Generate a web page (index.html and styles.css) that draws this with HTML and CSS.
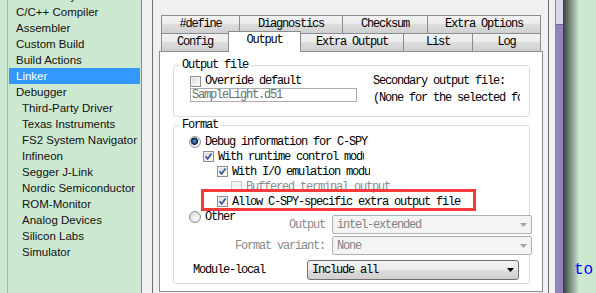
FILE: index.html
```html
<!DOCTYPE html>
<html lang="en">
<head>
    <meta charset="UTF-8">
    <title>Options - Linker</title>
    <link rel="stylesheet" href="styles.css">
</head>
<body>
<div class="screen">
    <div class="tree">
        <ul>
            <li>Static Analysis</li>
            <li>C/C++ Compiler</li>
            <li>Assembler</li>
            <li>Custom Build</li>
            <li>Build Actions</li>
            <li class="sel">Linker</li>
            <li>Debugger</li>
            <li class="sub">Third-Party Driver</li>
            <li class="sub">Texas Instruments</li>
            <li class="sub">FS2 System Navigator</li>
            <li class="sub">Infineon</li>
            <li class="sub">Segger J-Link</li>
            <li class="sub">Nordic Semiconductor</li>
            <li class="sub">ROM-Monitor</li>
            <li class="sub">Analog Devices</li>
            <li class="sub">Silicon Labs</li>
            <li class="sub">Simulator</li>
        </ul>
    </div>
    <div class="gutter"></div>

    <div class="dialog">
        <div class="tabs">
            <div class="tab-row">
                <div class="tab w78">#define</div>
                <div class="tab w103">Diagnostics</div>
                <div class="tab w85">Checksum</div>
                <div class="tab w114">Extra Options</div>
            </div>
            <div class="tab-row">
                <div class="tab w67">Config</div>
                <div class="tab on w73">Output</div>
                <div class="tab w102">Extra Output</div>
                <div class="tab w69">List</div>
                <div class="tab w69">Log</div>
            </div>
        </div>

        <div class="panel">
            <fieldset class="group">
                <legend>Output file</legend>
                <div class="out-body">
                    <div class="out-left">
                        <div class="check">
                            <span class="box"></span>
                            <span>Override default</span>
                        </div>
                        <div class="text-input">SampleLight.d51</div>
                    </div>
                    <div class="out-right">
                        <div class="line">Secondary output file:</div>
                        <div class="line second">(None for the selected format)</div>
                    </div>
                </div>
            </fieldset>

            <fieldset class="group format">
                <legend>Format</legend>
                <div class="row ind0">
                    <span class="radio on"></span>
                    <span>Debug information for C-SPY</span>
                </div>
                <div class="row ind1">
                    <span class="box"><svg viewBox="0 0 9 9"><path d="M1.5 4.3 L3.6 6.8 L7.6 1.6"/></svg></span>
                    <span class="clip clip-a">With runtime control modules</span>
                </div>
                <div class="row ind2">
                    <span class="box"><svg viewBox="0 0 9 9"><path d="M1.5 4.3 L3.6 6.8 L7.6 1.6"/></svg></span>
                    <span class="clip clip-b">With I/O emulation modules</span>
                </div>
                <div class="row ind3">
                    <span class="box off"></span>
                    <span class="dim">Buffered terminal output</span>
                </div>
                <div class="row ind2 marked">
                    <span class="box"><svg viewBox="0 0 9 9"><path d="M1.5 4.3 L3.6 6.8 L7.6 1.6"/></svg></span>
                    <span>Allow C-SPY-specific extra output file</span>
                    <span class="callout"></span>
                </div>
                <div class="alt">
                    <div class="row">
                        <span class="radio"></span>
                        <span>Other</span>
                    </div>
                    <div class="fields">
                        <div class="field">
                            <span class="dim">Output</span>
                            <div class="combo">
                                <span>intel-extended</span>
                                <svg class="arrow" viewBox="0 0 7 4"><polygon points="0,0 7,0 3.5,4"/></svg>
                            </div>
                        </div>
                        <div class="field">
                            <span class="dim">Format variant:</span>
                            <div class="combo">
                                <span>None</span>
                                <svg class="arrow" viewBox="0 0 7 4"><polygon points="0,0 7,0 3.5,4"/></svg>
                            </div>
                        </div>
                    </div>
                </div>
                <div class="module">
                    <span>Module-local</span>
                    <div class="combo active">
                        <span>Include all</span>
                        <svg class="arrow" viewBox="0 0 7 4"><polygon points="0,0 7,0 3.5,4"/></svg>
                    </div>
                </div>
            </fieldset>
        </div>
    </div>

    <div class="frame"></div>
    <div class="scroll"></div>
    <div class="editor"><span class="code">to</span></div>
</div>
</body>
</html>
```

FILE: styles.css
```css
* {
    box-sizing: border-box;
}
body {
    margin: 0;
    width: 596px;
    height: 293px;
    overflow: hidden;
    background: #f0f0f0;
}
.screen {
    display: flex;
    height: 293px;
}

/* category tree */
.tree {
    width: 142px;
    flex: none;
    background: #cde8d0;
    border-right: 1px solid #828790;
    padding-left: 7px;
    overflow: hidden;
    font-family: "Liberation Sans", Arial, sans-serif;
    font-size: 11.5px;
    color: #111;
}
.tree ul {
    list-style: none;
    margin: -12px 0 0;
    padding: 0;
    height: 320px;
    border-left: 1px solid #a9b9ab;
}
.tree li {
    height: 16px;
    line-height: 16px;
    margin: 0 1px;
    padding-left: 7px;
    white-space: nowrap;
}
.tree li.sub {
    padding-left: 13px;
}
.tree li.sel {
    background: #3399ff;
    color: #fff;
}

.gutter {
    width: 11px;
    flex: none;
    border-right: 1px solid #6e6e6e;
}

/* dialog */
.dialog {
    width: 396px;
    flex: none;
    border-right: 1px solid #6e6e6e;
    padding: 15px 0 0 6px;
    font-family: "Liberation Mono", "Courier New", monospace;
    font-size: 12px;
    letter-spacing: -1.2px;
    color: #000;
}
.tabs {
    margin-left: 2px;
    width: 380px;
}
.tab-row {
    display: flex;
    height: 18px;
}
.tab {
    height: 18px;
    border: 1px solid #898c95;
    border-right: none;
    border-bottom: none;
    background: linear-gradient(#f2f2f2, #ebebeb 45%, #dddddd 50%, #cfcfcf);
    text-align: center;
    line-height: 17px;
    white-space: nowrap;
}
.tab:last-child {
    border-right: 1px solid #898c95;
}
.tab.on {
    height: 21px;
    margin-top: -2px;
    border-right: 1px solid #898c95;
    background: #fff;
    line-height: 16px;
    position: relative;
    z-index: 1;
}
.tab.on + .tab {
    border-left: none;
}
.w67 { width: 67px; }
.w69 { width: 69px; }
.w73 { width: 73px; }
.w78 { width: 78px; }
.w85 { width: 85px; }
.w102 { width: 102px; }
.w103 { width: 103px; }
.w114 { width: 114px; }

.panel {
    width: 384px;
    height: 241px;
    background: #fff;
    border: 1px solid #898c95;
    padding-top: 7px;
}

.group {
    margin: 0 0 0 13px;
    width: 357px;
    min-width: 0;
    padding: 0;
    border: 1px solid #d5dfe5;
    border-radius: 3px;
}
.group legend {
    margin-left: 6px;
    padding: 0 2px;
    line-height: 12px;
}
.group.format {
    margin-top: 2px;
    padding: 3px 0 3px;
}

.out-body {
    display: flex;
    padding: 3px 0 11px 16px;
}
.out-left {
    width: 167px;
}
.out-right {
    margin-left: 16px;
    width: 147px;
    overflow: hidden;
    white-space: nowrap;
}
.out-right .line {
    line-height: 14px;
}
.out-right .second {
    margin-top: 3px;
}
.check {
    display: flex;
    align-items: center;
    gap: 4px;
    height: 14px;
    white-space: nowrap;
}
.text-input {
    height: 14px;
    border: 1px solid #abadb3;
    color: #6d6d6d;
    padding-left: 1px;
    line-height: 12px;
    white-space: nowrap;
}

.row {
    display: flex;
    align-items: center;
    gap: 4px;
    height: 15px;
    white-space: nowrap;
}
.ind0 { padding-left: 15px; }
.ind1 { padding-left: 29px; }
.ind2 { padding-left: 43px; }
.ind3 { padding-left: 57px; }
.clip {
    overflow: hidden;
}
.clip-a { width: 146px; }
.clip-b { width: 138px; }
.dim {
    color: #8b8b8b;
}

.box {
    width: 11px;
    height: 11px;
    flex: none;
    border: 1px solid #8f8f8f;
    background: linear-gradient(135deg, #d9d9d9, #fbfbfb);
    box-shadow: inset 0 0 0 1px #f2f2f2;
}
.box svg {
    display: block;
    width: 9px;
    height: 9px;
    fill: none;
    stroke: #3a5898;
    stroke-width: 1.7;
}
.box.off {
    border-color: #c6c6c6;
    background: #f4f4f4;
    box-shadow: none;
}
.radio {
    width: 12px;
    height: 12px;
    flex: none;
    border-radius: 50%;
    border: 1px solid #8f8f8f;
    background: radial-gradient(circle at 62% 66%, #fdfdfd, #cfcfcf);
}
.radio.on {
    background: radial-gradient(circle at 45% 42%, #8db4e0 0, #2a5a92 1.5px, #0d2540 3.3px, #e4e4e4 4px, #f8f8f8 6px);
}

.marked {
    position: relative;
}
.callout {
    position: absolute;
    left: 27px;
    top: -5px;
    width: 275px;
    height: 22px;
    border: 3px solid #f43a3a;
}

.alt {
    display: flex;
    align-items: flex-start;
    padding: 0 10px 0 15px;
}
.fields {
    margin-left: auto;
    margin-top: 6px;
}
.field {
    display: flex;
    align-items: center;
    justify-content: flex-end;
    gap: 7px;
    white-space: nowrap;
}
.field + .field {
    margin-top: 2px;
}
.combo {
    display: flex;
    align-items: center;
    justify-content: space-between;
    flex: none;
    width: 200px;
    height: 19px;
    padding: 0 4px;
    border: 1px solid #adb2b5;
    border-radius: 2px;
    background: #f4f4f4;
    color: #838383;
    white-space: nowrap;
}
.arrow {
    width: 7px;
    height: 4px;
    fill: #a3a3a3;
}
.module {
    display: flex;
    align-items: center;
    justify-content: space-between;
    height: 20px;
    margin-top: 5px;
    padding: 0 10px 0 19px;
    white-space: nowrap;
}
.combo.active {
    width: 212px;
    height: 20px;
    border-color: #707070;
    border-radius: 3px;
    background: linear-gradient(#f2f2f2, #ebebeb 50%, #dddddd 51%, #cfcfcf);
    color: #000;
}
.combo.active .arrow {
    fill: #000;
}

/* window edges and editor behind */
.frame {
    width: 7px;
    flex: none;
    border-right: 1px solid #8a8a8a;
}
.scroll {
    width: 7px;
    flex: none;
    background: linear-gradient(#dcd6ea 0, #dcd6ea 24px, #6f6394 24px, #6f6394 25px, #9284b8 25px);
}
.editor {
    width: 33px;
    flex: none;
    background: linear-gradient(to right, #34403a, #cde8d0 16px);
    padding: 262px 0 0 11px;
    font-family: "Liberation Mono", "Courier New", monospace;
    font-size: 16px;
    line-height: 16px;
    color: #0000ff;
}
```
